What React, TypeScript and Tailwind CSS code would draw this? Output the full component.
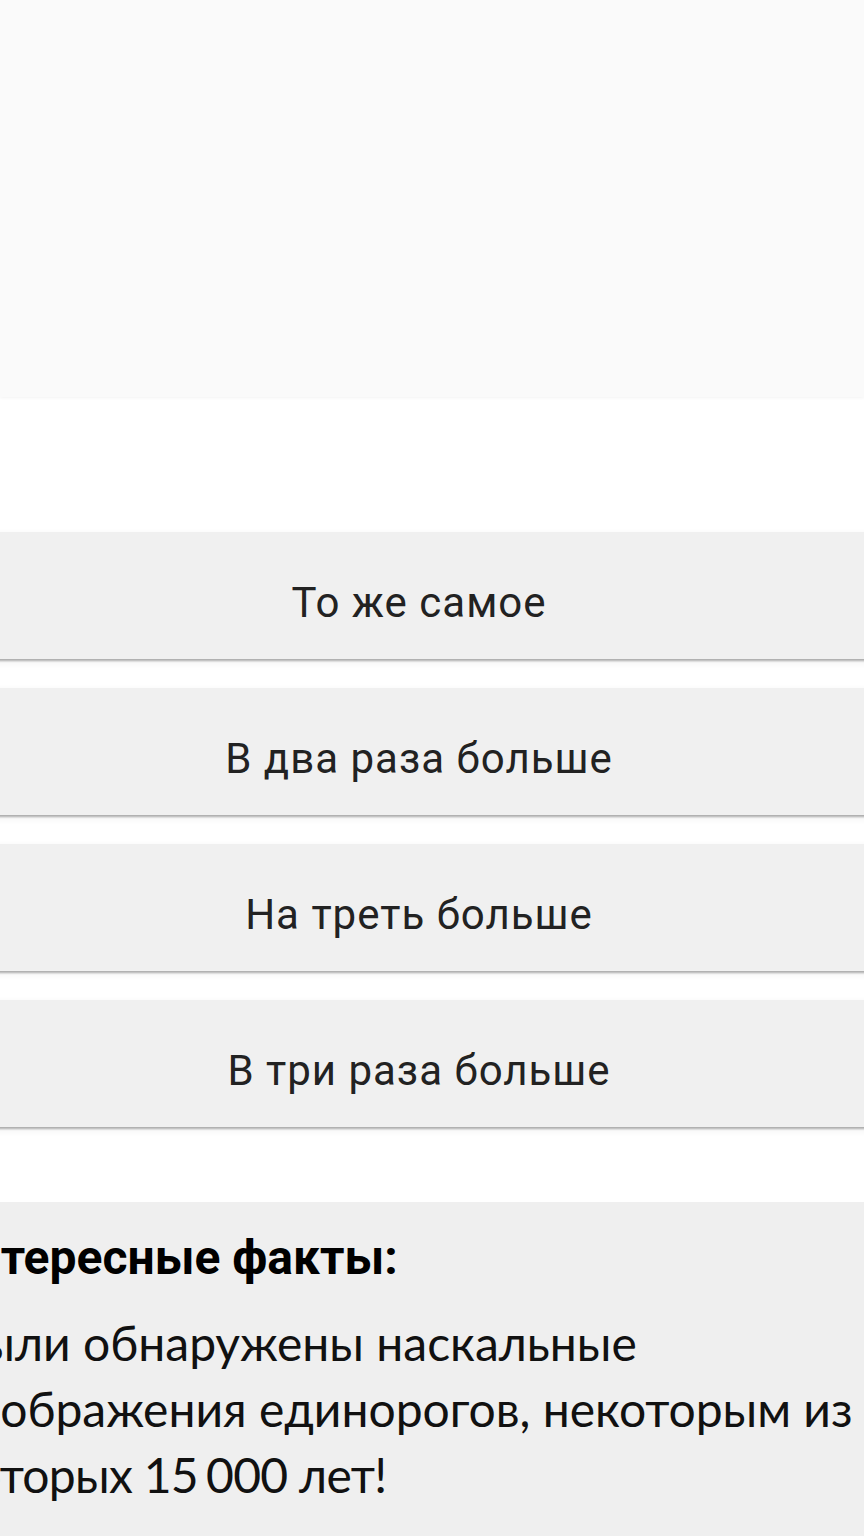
import React from "react";

const answers = ["То же самое", "В два раза больше", "На треть больше", "В три раза больше"];

export default function App() {
  return (
    <div className="w-[864px] min-h-[1536px] overflow-hidden bg-white">
      <div className="h-[397px] bg-[#fafafa] shadow-[0_1px_3px_rgba(0,0,0,0.05)]" />
      <div className="ml-[-46px] w-[930px]">
        <div className="pt-[135px] flex flex-col gap-[29px]">
          {answers.map((a) => (
            <div
              key={a}
              className="h-[127px] bg-[#f0f0f0] flex items-center justify-center text-[42px] tracking-[1px] text-[#222] shadow-[0_2px_2px_rgba(0,0,0,0.3),0_3px_8px_rgba(0,0,0,0.06)]"
              style={{ fontFamily: "Roboto, sans-serif" }}
            >
              <span className="pt-[14px]">{a}</span>
            </div>
          ))}
        </div>
        <div className="mt-[75px] bg-[#efefef] pt-[27px] pb-[40px]">
          <div
            className="ml-[-14px] text-[48px] font-bold leading-[1.2] text-black"
            style={{ fontFamily: "Roboto, sans-serif" }}
          >
            Интересные факты:
          </div>
          <p
            className="ml-[-3px] mt-[23px] text-[48px] leading-[66px] text-[#111]"
            style={{ fontFamily: "Lato, sans-serif" }}
          >
            Были обнаружены наскальные
            <br />
            изображения единорогов, некоторым из
            <br />
            <span className="tracking-[-0.7px]">
              которых 15<span className="ml-[8px]">000</span> лет!
            </span>
          </p>
        </div>
      </div>
    </div>
  );
}
